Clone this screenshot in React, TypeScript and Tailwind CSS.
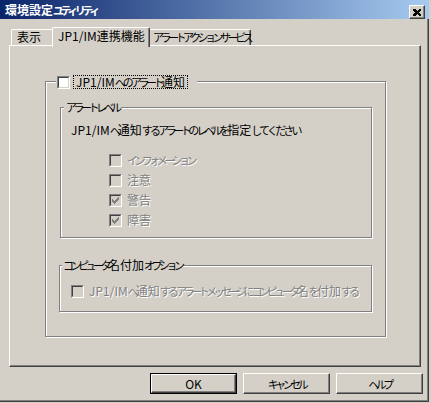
import React from "react";

const F = "font-['Noto_Sans_CJK_JP','Noto_Sans_CJK_SC',sans-serif]";

function T({ s }: { s: string }) {
  const parts = s.split(/([\u3040-\u309f]+|[\u30a0-\u30ff]+)/);
  return (
    <>
      {parts.map((p, i) => {
        if (p === "") return null;
        if (/^[\u3040-\u309f]+$/.test(p))
          return (
            <span key={i} className="text-[11px] tracking-[-2.8px]">
              {p}
            </span>
          );
        if (/^[\u30a0-\u30ff]+$/.test(p))
          return (
            <span key={i} className="text-[11px] tracking-[-3.5px]">
              {p}
            </span>
          );
        return <React.Fragment key={i}>{p}</React.Fragment>;
      })}
    </>
  );
}

function Check({ checked = false, disabled = false }: { checked?: boolean; disabled?: boolean }) {
  return (
    <span className="inline-block w-[13px] h-[13px] shrink-0 border border-t-[#808080] border-l-[#808080] border-b-white border-r-white">
      <span
        className={
          disabled
            ? "block w-[11px] h-[11px] border border-t-[#404040] border-l-[#404040] border-b-[#d4d0c8] border-r-[#d4d0c8] bg-[#d4d0c8]"
            : "block w-[11px] h-[11px] border border-t-[#404040] border-l-[#404040] border-b-[#d4d0c8] border-r-[#d4d0c8] bg-white"
        }
      >
        {checked && (
          <svg width="9" height="9" viewBox="0 0 9 9" className="block" shapeRendering="crispEdges">
            <g fill={disabled ? "#808080" : "#000"}>
              <rect x="1" y="3" width="1" height="3" />
              <rect x="2" y="4" width="1" height="3" />
              <rect x="3" y="5" width="1" height="3" />
              <rect x="4" y="4" width="1" height="3" />
              <rect x="5" y="3" width="1" height="3" />
              <rect x="6" y="2" width="1" height="3" />
              <rect x="7" y="1" width="1" height="3" />
            </g>
          </svg>
        )}
      </span>
    </span>
  );
}

function DisabledText({ s }: { s: string }) {
  return (
    <span className="text-[#808080] [text-shadow:1px_1px_0_#fff] whitespace-nowrap">
      <T s={s} />
    </span>
  );
}

function Button({ label, def = false }: { label: string; def?: boolean }) {
  if (def) {
    return (
      <div className="w-[87px] h-[21px] border border-black">
        <div className="w-full h-full border border-t-white border-l-white border-r-[#404040] border-b-[#404040] shadow-[inset_-1px_-1px_0_#808080] flex items-center justify-center text-black">
          <T s={label} />
        </div>
      </div>
    );
  }
  return (
    <div className="w-[87px] h-[21px] border border-t-white border-l-white border-r-[#404040] border-b-[#404040] shadow-[inset_-1px_-1px_0_#808080] flex items-center justify-center text-black">
      <T s={label} />
    </div>
  );
}

export default function App() {
  return (
    <div className={`w-[431px] h-[403px] bg-[#d4d0c8] text-[12px] leading-[14px] text-black ${F}`}>
      <div className="w-[429px] h-[402px] border-r border-b border-r-[#404040] border-b-[#404040] shadow-[inset_-1px_-1px_0_#808080] flex flex-col">
        {/* title bar */}
        <div className="h-[19px] w-[429px] bg-[linear-gradient(to_right,#0a246a,#a6caf0)] flex items-end justify-between pl-[5px] pr-[4px]">
          <span className="text-[#ffffff] font-bold self-center whitespace-nowrap">
            <T s="環境設定ユティリティ" />
          </span>
          <div className="w-[16px] h-[14px] bg-[#d4d0c8] border border-t-white border-l-white border-r-[#404040] border-b-[#404040] shadow-[inset_-1px_-1px_0_#808080] flex items-center justify-center">
            <svg width="8" height="7" viewBox="0 0 8 7" shapeRendering="crispEdges">
              <path d="M0 0h2l2 2l2-2h2v1l-2 2.5l2 2.5v1h-2l-2-2l-2 2h-2v-1l2-2.5l-2-2.5z" fill="#000" />
            </svg>
          </div>
        </div>

        {/* tabs */}
        <div className="pl-[9px] mt-[8px]">
          <div className="relative z-10 h-[18px] flex items-start pl-[2px]">
            <div className="mt-[2px] w-[41px] h-[16px] border-t border-l border-t-white border-l-white pl-[5px] rounded-tl-[2px] whitespace-nowrap">
              表示
            </div>
            <div className="w-[98px] h-[20px] bg-[#d4d0c8] border-t border-l border-r border-t-white border-l-white border-r-[#404040] shadow-[inset_-1px_0_0_#808080] pl-[5px] pt-[1px] rounded-tl-[2px] rounded-tr-[2px] whitespace-nowrap">
              JP1/IM連携機能
            </div>
            <div className="mt-[2px] w-[101px] h-[16px] border-t border-r border-t-white border-r-[#404040] shadow-[inset_-1px_0_0_#808080] pl-[3px] whitespace-nowrap rounded-tr-[2px]">
              <T s="アラートアクションサービス" />
            </div>
          </div>

          {/* panel */}
          <div className="w-[412px] h-[322px] border border-t-white border-l-white border-r-[#404040] border-b-[#404040] shadow-[inset_-1px_-1px_0_#808080] pl-[35px] pt-[35px]">
            {/* outer group */}
            <div className="relative w-[341px] h-[256px] border border-[#808080] shadow-[1px_1px_0_#fff,inset_1px_1px_0_#fff] pl-[14px] pt-[25px]">
              <div className="absolute left-[10px] top-[-7px] bg-[#d4d0c8] flex items-center pl-[1px] pr-[9px] h-[14px]">
                <Check />
                <span className="ml-[3px] px-[2px] h-[14px] border border-dotted border-black flex items-center whitespace-nowrap">
                  <T s="JP1/IMへのアラート通知" />
                </span>
              </div>

              {/* group 1 */}
              <div className="relative w-[312px] h-[131px] border border-[#808080] shadow-[1px_1px_0_#fff,inset_1px_1px_0_#fff] pl-[10px] pt-[15px]">
                <div className="absolute left-[3px] top-[-8px] bg-[#d4d0c8] px-[2px] whitespace-nowrap">
                  <T s="アラートレベル" />
                </div>
                <div className="whitespace-nowrap">
                  <T s="JP1/IMへ通知するアラートのレベルを指定してください" />
                </div>
                <div className="flex flex-col gap-[6px] pl-[38px] mt-[16px]">
                  <div className="flex items-center gap-[5px]">
                    <Check disabled />
                    <DisabledText s="インフォメーション" />
                  </div>
                  <div className="flex items-center gap-[5px]">
                    <Check disabled />
                    <DisabledText s="注意" />
                  </div>
                  <div className="flex items-center gap-[5px]">
                    <Check disabled checked />
                    <DisabledText s="警告" />
                  </div>
                  <div className="flex items-center gap-[5px]">
                    <Check disabled checked />
                    <DisabledText s="障害" />
                  </div>
                </div>
              </div>

              {/* group 2 */}
              <div className="relative mt-[27px] w-[313px] h-[47px] border border-[#808080] shadow-[1px_1px_0_#fff,inset_1px_1px_0_#fff] pl-[11px] pt-[18px] -ml-[1px]">
                <div className="absolute left-[2px] top-[-8px] bg-[#d4d0c8] px-[1px] whitespace-nowrap">
                  <T s="コンピュータ名付加オプション" />
                </div>
                <div className="flex items-center gap-[5px]">
                  <Check disabled />
                  <DisabledText s="JP1/IMへ通知するアラートメッセージにコンピュータ名を付加する" />
                </div>
              </div>
            </div>
          </div>
        </div>

        {/* buttons */}
        <div className="flex pl-[150px] gap-[6px] mt-[6px]">
          <Button label="OK" def />
          <Button label="キャンセル" />
          <Button label="ヘルプ" />
        </div>
      </div>
    </div>
  );
}
